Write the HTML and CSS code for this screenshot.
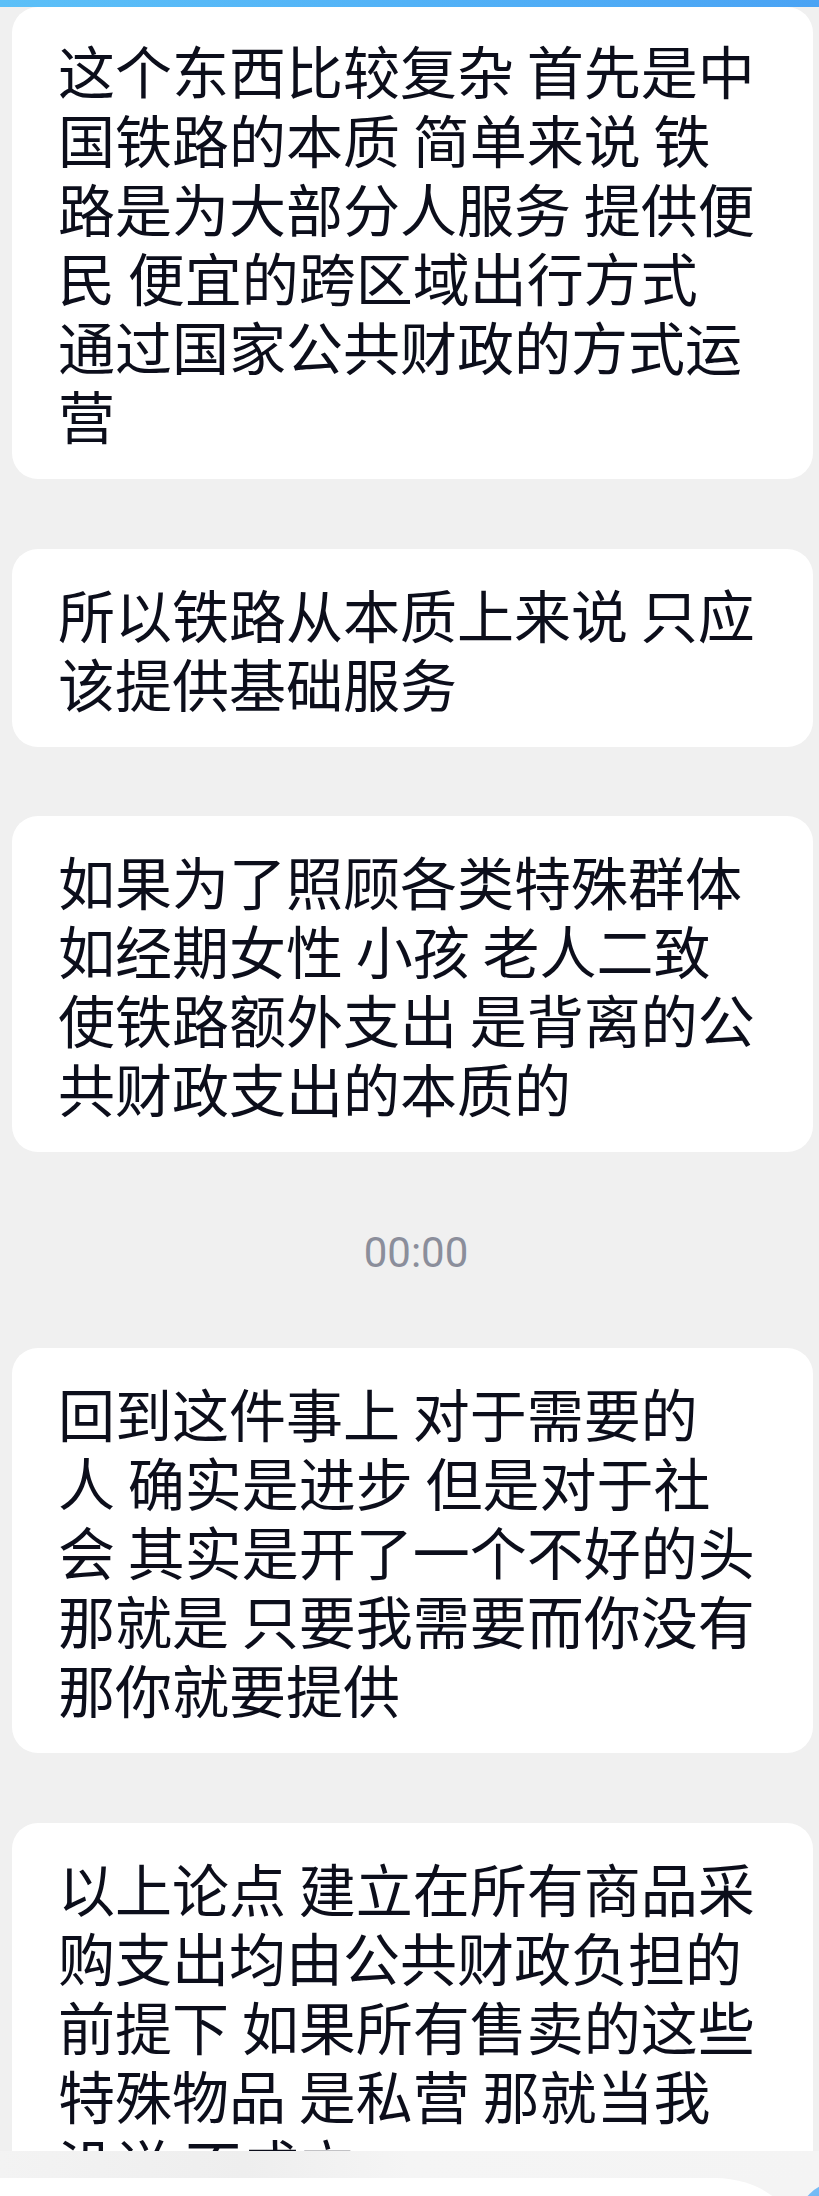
FILE: index.html
```html
<!DOCTYPE html>
<html lang="zh-CN">
<head>
<meta charset="utf-8">
<title>聊天</title>
<link rel="stylesheet" href="styles.css">
</head>
<body>
<div class="topbar"></div>
<main class="chat">
  <div class="bubble first">
    <span class="ln">这个东西比较复杂 首先是中</span>
    <span class="ln">国铁路的本质 简单来说 铁</span>
    <span class="ln">路是为大部分人服务 提供便</span>
    <span class="ln">民 便宜的跨区域出行方式</span>
    <span class="ln">通过国家公共财政的方式运</span>
    <span class="ln">营</span>
  </div>
  <div class="bubble">
    <span class="ln">所以铁路从本质上来说 只应</span>
    <span class="ln">该提供基础服务</span>
  </div>
  <div class="bubble">
    <span class="ln">如果为了照顾各类特殊群体</span>
    <span class="ln">如经期女性 小孩 老人二致</span>
    <span class="ln">使铁路额外支出 是背离的公</span>
    <span class="ln">共财政支出的本质的</span>
  </div>
  <div class="time">00:00</div>
  <div class="bubble">
    <span class="ln">回到这件事上 对于需要的</span>
    <span class="ln">人 确实是进步 但是对于社</span>
    <span class="ln">会 其实是开了一个不好的头</span>
    <span class="ln">那就是 只要我需要而你没有</span>
    <span class="ln">那你就要提供</span>
  </div>
  <div class="bubble">
    <span class="ln">以上论点 建立在所有商品采</span>
    <span class="ln">购支出均由公共财政负担的</span>
    <span class="ln">前提下 如果所有售卖的这些</span>
    <span class="ln">特殊物品 是私营 那就当我</span>
    <span class="ln">没说 不成立</span>
  </div>
</main>
<div class="bottombar">
  <div class="band"></div>
  <div class="inputrow"><div class="input"></div></div>
  <div class="fab"></div>
</div>
</body>
</html>
```
FILE: styles.css
```css
html, body {
  margin: 0;
  padding: 0;
}
body {
  width: 819px;
  height: 2196px;
  overflow: hidden;
  background: #f0f0f0;
  font-family: "Noto Sans CJK SC", "Noto Sans", sans-serif;
  color: #0c0e1b;
  position: relative;
}
.topbar {
  position: absolute;
  top: 0;
  left: 0;
  width: 819px;
  height: 7px;
  background: linear-gradient(90deg, #5cc0f8 0%, #52b2f7 50%, #4aa3f4 100%);
  z-index: 5;
}
.chat {
  display: flex;
  flex-direction: column;
  gap: 69.5px;
  padding: 7px 6px 0 12px;
}
.bubble {
  background: #ffffff;
  border-radius: 26px;
  padding: 30px 20px 30px 46px;
  font-size: 57px;
  line-height: 69px;
}
.bubble.first {
  padding-top: 28px;
}
.ln {
  display: block;
  white-space: nowrap;
}
.time {
  height: 57px;
  line-height: 62px;
  text-align: center;
  font-family: Roboto, "Noto Sans", sans-serif;
  font-size: 42px;
  color: #8b8e9b;
  padding-left: 7px;
}
.bottombar {
  position: absolute;
  left: 0;
  bottom: 0;
  width: 819px;
  height: 45px;
  overflow: hidden;
  background: #f4f4f4;
  z-index: 5;
}
.band {
  height: 27px;
  background: linear-gradient(90deg, #f3f3f3 0%, #eeeeee 30%, #f5f5f5 50%, #f4f4f4 100%);
}
.inputrow {
  height: 18px;
  display: flex;
}
.input {
  width: 795px;
  height: 60px;
  background: #ffffff;
  border-top-right-radius: 80px 60px;
}
.fab {
  position: absolute;
  left: 798px;
  top: 31px;
  width: 80px;
  height: 80px;
  border-radius: 50%;
  background: linear-gradient(160deg, #7cc0f6, #4f9ff0);
}
```
